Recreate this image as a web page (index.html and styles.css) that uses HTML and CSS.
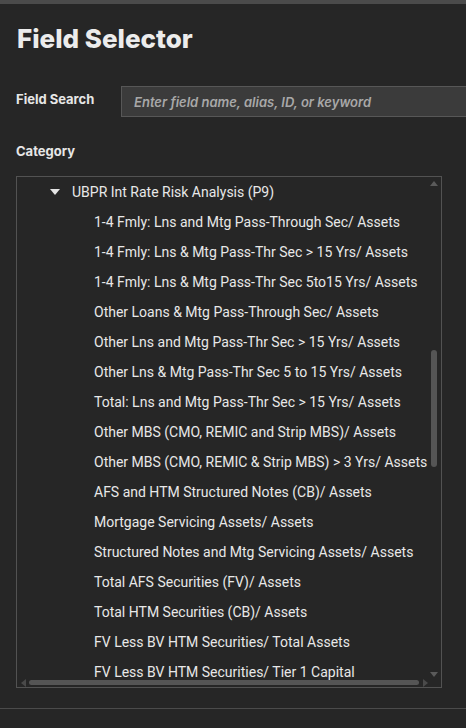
FILE: index.html
```html
<!DOCTYPE html>
<html>
<head>
<meta charset="utf-8">
<link rel="stylesheet" href="styles.css">
</head>
<body>
<div class="topbar"></div>
<main class="panel">
  <h1 class="title">Field Selector</h1>
  <div class="search-row">
    <span class="label">Field Search</span>
    <div class="input">Enter field name, alias, ID, or keyword</div>
  </div>
  <div class="label cat">Category</div>
  <div class="tree">
    <div class="rows">
      <div class="row parent"><svg class="caret" width="10" height="6" viewBox="0 0 10 6"><path d="M0 0H10L5 6Z" fill="#e4e4e4"/></svg>UBPR Int Rate Risk Analysis (P9)</div>
      <div class="row child">1-4 Fmly: Lns and Mtg Pass-Through Sec/ Assets</div>
      <div class="row child">1-4 Fmly: Lns &amp; Mtg Pass-Thr Sec &gt; 15 Yrs/ Assets</div>
      <div class="row child">1-4 Fmly: Lns &amp; Mtg Pass-Thr Sec 5to15 Yrs/ Assets</div>
      <div class="row child">Other Loans &amp; Mtg Pass-Through Sec/ Assets</div>
      <div class="row child">Other Lns and Mtg Pass-Thr Sec &gt; 15 Yrs/ Assets</div>
      <div class="row child">Other Lns &amp; Mtg Pass-Thr Sec 5 to 15 Yrs/ Assets</div>
      <div class="row child">Total: Lns and Mtg Pass-Thr Sec &gt; 15 Yrs/ Assets</div>
      <div class="row child">Other MBS (CMO, REMIC and Strip MBS)/ Assets</div>
      <div class="row child">Other MBS (CMO, REMIC &amp; Strip MBS) &gt; 3 Yrs/ Assets</div>
      <div class="row child">AFS and HTM Structured Notes (CB)/ Assets</div>
      <div class="row child">Mortgage Servicing Assets/ Assets</div>
      <div class="row child">Structured Notes and Mtg Servicing Assets/ Assets</div>
      <div class="row child">Total AFS Securities (FV)/ Assets</div>
      <div class="row child">Total HTM Securities (CB)/ Assets</div>
      <div class="row child">FV Less BV HTM Securities/ Total Assets</div>
      <div class="row child">FV Less BV HTM Securities/ Tier 1 Capital</div>
    </div>
    <div class="vscroll">
      <svg class="arr up" width="8" height="5" viewBox="0 0 8 5"><path d="M0 5H8L4 0Z" fill="#5a5a5a"/></svg>
      <div class="vthumb"></div>
      <svg class="arr down" width="8" height="5" viewBox="0 0 8 5"><path d="M0 0H8L4 5Z" fill="#5a5a5a"/></svg>
    </div>
    <div class="hscroll">
      <svg class="arr left" width="5" height="8" viewBox="0 0 5 8"><path d="M5 0V8L0 4Z" fill="#4a4a4a"/></svg>
      <div class="hthumb"></div>
      <svg class="arr right" width="5" height="8" viewBox="0 0 5 8"><path d="M0 0V8L5 4Z" fill="#4a4a4a"/></svg>
    </div>
  </div>
</main>
<div class="footer-line"></div>
</body>
</html>
```
FILE: styles.css
```css
html, body {
  margin: 0;
  padding: 0;
  background: #262626;
  overflow: hidden;
}
body {
  width: 466px;
  height: 728px;
  font-family: Roboto, "Liberation Sans", sans-serif;
  color: #e2e2e2;
}
.topbar {
  height: 4px;
  background: #4b4b4b;
}
.panel {
  padding: 0 0 0 16px;
}
.title {
  margin: 0;
  padding: 20px 0 0 1px;
  font-family: Inter, Roboto, sans-serif;
  font-size: 26px;
  font-weight: 800;
  line-height: 30px;
  color: #ececec;
}
.search-row {
  display: flex;
  align-items: center;
  margin-top: 32px;
}
.label {
  font-family: Inter, Roboto, sans-serif;
  font-weight: 700;
  font-size: 13px;
  color: #e6e6e6;
}
.search-row .label {
  width: 105px;
  flex: none;
  margin-top: -6px;
}
.input {
  flex: 1;
  height: 31px;
  box-sizing: border-box;
  margin-right: -20px;
  background: #3b3b3b;
  border: 1px solid #575757;
  border-right: none;
  padding-left: 12px;
  display: flex;
  align-items: center;
  font-style: italic;
  font-family: Inter, Roboto, sans-serif;
  font-weight: 600;
  font-size: 13px;
  color: #a8a8a8;
}
.cat {
  margin-top: 26px;
  line-height: 16px;
}
.tree {
  position: relative;
  margin-top: 17px;
  width: 426px;
  height: 512px;
  box-sizing: border-box;
  border: 1px solid #525252;
  overflow: hidden;
}
.row {
  height: 30px;
  line-height: 30px;
  white-space: nowrap;
  font-size: 14px;
  color: #e8e8e8;
}
.parent {
  padding-left: 33px;
  display: flex;
  align-items: center;
}
.caret {
  margin-right: 12px;
}
.child {
  padding-left: 77px;
}
.vscroll {
  position: absolute;
  top: 0;
  right: 0;
  width: 13px;
  height: 100%;
  background: #262626;
}
.vscroll .up {
  position: absolute;
  top: 4px;
  left: 2px;
}
.vscroll .down {
  position: absolute;
  bottom: 10px;
  left: 2px;
}
.vthumb {
  position: absolute;
  top: 173px;
  left: 3px;
  width: 6px;
  height: 117px;
  border-radius: 3px;
  background: #555555;
}
.hscroll {
  position: absolute;
  left: 0;
  bottom: 0;
  width: 412px;
  height: 8px;
}
.hscroll .left {
  position: absolute;
  left: 4px;
  top: 0;
}
.hscroll .right {
  position: absolute;
  left: 406px;
  top: 0;
}
.hthumb {
  position: absolute;
  left: 12px;
  top: 1px;
  width: 390px;
  height: 5px;
  border-radius: 3px;
  background: #555555;
}
.footer-line {
  margin-top: 20px;
  height: 1px;
  background: #4b4b4b;
}
```
